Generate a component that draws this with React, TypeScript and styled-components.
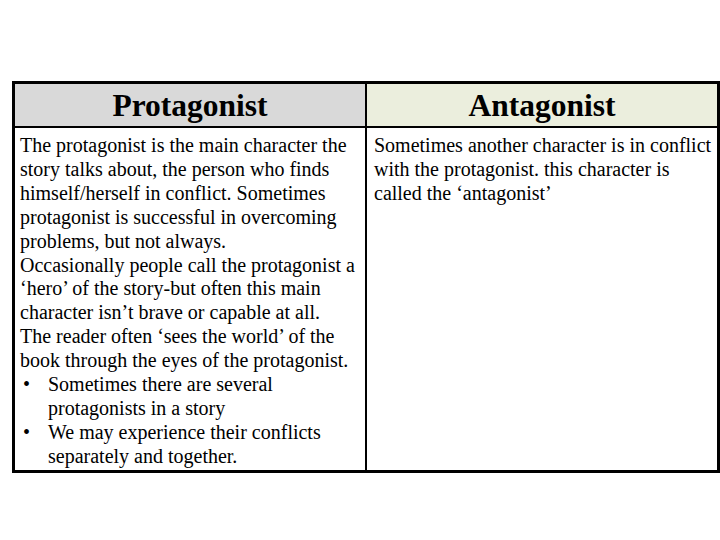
import React from "react";
import styled, { createGlobalStyle } from "styled-components";

const Global = createGlobalStyle`
  html, body { margin: 0; padding: 0; background: #ffffff; }
  body { font-family: "Liberation Serif", "Times New Roman", serif; color: #000; }
`;

const Page = styled.div`
  width: 720px;
  height: 540px;
  padding-top: 81px;
  padding-left: 12px;
  box-sizing: border-box;
  overflow: hidden;
`;

const Table = styled.div`
  width: 708px;
  box-sizing: border-box;
  border: 3px solid #000;
  display: grid;
  grid-template-columns: 350px 352px;
  grid-template-rows: 44px 342px;
`;

const HeadCell = styled.div<{ $bg: string; $divider?: boolean }>`
  background: ${(p) => p.$bg};
  border-bottom: 2px solid #000;
  border-left: ${(p) => (p.$divider ? "2px solid #000" : "none")};
  box-sizing: border-box;
  display: flex;
  align-items: center;
  justify-content: center;
  padding-top: 1px;
  font-weight: bold;
  font-size: 31.5px;
  line-height: 42px;
`;

const BodyCell = styled.div<{ $divider?: boolean; $pl: number }>`
  border-left: ${(p) => (p.$divider ? "2px solid #000" : "none")};
  box-sizing: border-box;
  padding: 6px 0 0 ${(p) => p.$pl}px;
  font-size: 20px;
  line-height: 23.9px;
  white-space: nowrap;
`;

const Bullets = styled.ul`
  list-style: none;
  margin: 0;
  padding: 0;
`;

const BulletItem = styled.li`
  position: relative;
  padding-left: 28px;
  &::before {
    content: "•";
    position: absolute;
    left: 3px;
    top: 0;
  }
`;

export default function App() {
  return (
    <>
      <Global />
      <Page>
        <Table>
          <HeadCell $bg="#d9d9d9">Protagonist</HeadCell>
          <HeadCell $bg="#ebeedd" $divider>
            Antagonist
          </HeadCell>
          <BodyCell $pl={5}>
            The protagonist is the main character the
            <br />
            story talks about, the person who finds
            <br />
            himself/herself in conflict. Sometimes
            <br />
            protagonist is successful in overcoming
            <br />
            problems, but not always.
            <br />
            Occasionally people call the protagonist a
            <br />
            ‘hero’ of the story-but often this main
            <br />
            character isn’t brave or capable at all.
            <br />
            The reader often ‘sees the world’ of the
            <br />
            book through the eyes of the protagonist.
            <Bullets>
              <BulletItem>
                Sometimes there are several
                <br />
                protagonists in a story
              </BulletItem>
              <BulletItem>
                We may experience their conflicts
                <br />
                separately and together.
              </BulletItem>
            </Bullets>
          </BodyCell>
          <BodyCell $pl={7} $divider>
            Sometimes another character is in conflict
            <br />
            with the protagonist. this character is
            <br />
            called the ‘antagonist’
          </BodyCell>
        </Table>
      </Page>
    </>
  );
}
